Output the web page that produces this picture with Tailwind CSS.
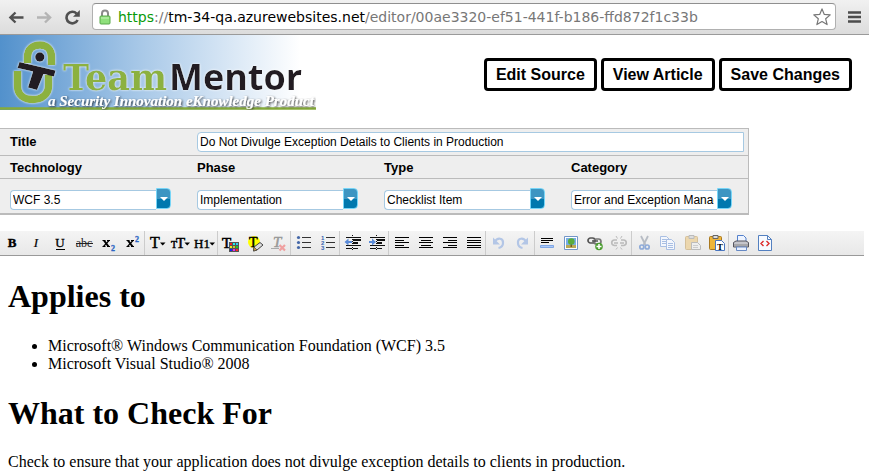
<!DOCTYPE html>
<html lang="en">
<head>
<meta charset="utf-8">
<meta name="viewport" content="width=device-width, initial-scale=1">
<title>TeamMentor Editor</title>
<script src="https://cdn.jsdelivr.net/npm/@tailwindcss/browser@4"></script>
</head>
<body class="min-h-screen overflow-hidden bg-white font-['Liberation_Sans',Arial,sans-serif] text-black">

<!-- Browser bar -->
<nav class="flex h-[35px] items-center border-b border-[#9a9a9a] bg-linear-to-b from-[#f1f1f1] to-[#dcdcdc] pr-2 pb-px" aria-label="Browser">
  <button class="ml-2 size-4" aria-label="Back"><svg viewBox="0 0 16 16" class="size-4" fill="none" stroke="#505050" stroke-width="2.4"><path d="M15.5 8.5H3M7.5 3.5L2.4 8.5l5.1 5"/></svg></button>
  <button class="ml-3 size-4" aria-label="Forward"><svg viewBox="0 0 16 16" class="size-4" fill="none" stroke="#b4b4b4" stroke-width="2.4"><path d="M1 8.500H13.500M9 3.500l5.100 5-5.100 5"/></svg></button>
  <button class="ml-3 size-4" aria-label="Reload"><svg viewBox="0 0 16 16" class="size-4" fill="none"><path d="M12.600 4.600A5.800 5.800 0 1 0 13.600 11" stroke="#505050" stroke-width="2.600"/><path d="M15.800 1v6.800H9z" fill="#505050"/></svg></button>
  <div class="ml-3 flex h-[27px] min-w-0 flex-1 items-center rounded-[4px] border border-[#b0b0b0] border-t-[#8f8f8f] bg-white pr-1 pl-1.5">
    <svg viewBox="0 0 12 16" class="h-4 w-3 shrink-0" aria-hidden="true"><path d="M3 8V4.500a3 3 0 0 1 6 0V8" fill="none" stroke="#8b8b8b" stroke-width="2"/><rect x="1" y="7" width="10" height="8" rx="1" fill="#8fe07c" stroke="#58a94a"/><path d="M2 9h8" stroke="#c5f5b8"/></svg>
    <div role="textbox" contenteditable="true" aria-label="Address" class="ml-[7px] min-w-0 flex-1 overflow-hidden font-['DejaVu_Sans',sans-serif] text-sm leading-5 whitespace-nowrap text-[#777]"><span class="text-[#0a9a0a]">https</span>://<span class="text-black">tm-34-qa.azurewebsites.net</span>/editor/00ae3320-ef51-441f-b186-ffd872f1c33b</div>
    <button class="size-[18px] shrink-0" aria-label="Bookmark"><svg viewBox="0 0 18 18" class="size-[18px]" fill="#fff" stroke="#777" stroke-width="1.200" stroke-linejoin="round"><path d="M9 .9l2.300 5.500 5.900.5-4.500 3.900 1.400 5.800L9 13.500l-5.100 3.100 1.400-5.800L.8 6.900l5.900-.5z"/></svg></button>
  </div>
  <button class="ml-3 h-3 w-[13px]" aria-label="Menu"><svg viewBox="0 0 13 12" class="h-3 w-[13px]" stroke="#4c4c4c" stroke-width="2.600"><path d="M0 1.500h13M0 6h13M0 10.500h13"/></svg></button>
</nav>

<!-- Banner -->
<header class="flex items-start justify-between">
  <a href="#" aria-label="TeamMentor home" class="block bg-linear-to-r from-[#5291cc] via-[#a9c9e8] via-45% to-white to-95%">
    <svg viewBox="0 0 316 75" class="block h-[75px] w-[316px]">
      <defs>
        <filter id="glow" x="-20%" y="-20%" width="140%" height="140%"><feDropShadow dx="0" dy="0" stdDeviation="1.300" flood-color="#fff" flood-opacity="1"/></filter>
        <filter id="shade" x="-5%" y="-30%" width="110%" height="170%"><feDropShadow dx="1" dy="1" stdDeviation="1" flood-color="#222" flood-opacity=".85"/></filter>
      </defs>
      <path d="M0 73.500H316" stroke="#86ab3a" stroke-width="2.500"/>
      <g filter="url(#glow)">
        <path d="M27.500 28V22C27.500 14 33 10 40 10S51.500 15 51.500 22V30" fill="none" stroke="#8cb140" stroke-width="7.500"/>
        <path d="M17.500 36V51C17.500 60 24 64.500 33 64.500S48.500 59 48.500 51V40" fill="none" stroke="#8cb140" stroke-width="7.500"/>
        <circle cx="39.800" cy="22" r="4.700" fill="#231f20"/>
        <path d="M19.500 27L55.500 35.500 54 41.500 43.500 39 37 55 28 52.500 33 36.500 17.500 33z" fill="#231f20"/>
        <text x="63" y="54.500" font-family="'DejaVu Serif',serif" font-weight="bold" font-size="35" fill="#8cb140">Team</text>
        <text x="169" y="54.500" font-family="'Open Sans',sans-serif" font-weight="bold" font-size="36" fill="#231f20">Mentor</text>
      </g>
      <text x="48" y="71" filter="url(#shade)" font-family="'Liberation Serif',serif" font-style="italic" font-weight="bold" font-size="15" fill="#fff">a Security Innovation eKnowledge Product</text>
    </svg>
  </a>
  <div class="mt-[23px] mr-[17px] flex gap-1 text-base leading-5 font-bold">
    <button class="rounded-[4px] border-3 border-black px-[9px] pt-1 pb-[3px]">Edit Source</button>
    <button class="rounded-[4px] border-3 border-black px-[9px] pt-1 pb-[3px]">View Article</button>
    <button class="rounded-[4px] border-3 border-black px-[9px] pt-1 pb-[3px]">Save Changes</button>
  </div>
</header>

<!-- Article properties -->
<form class="mt-[18px] max-w-[749px] border-t border-r border-b-2 border-[#bbb] bg-[#eee]">
  <div class="grid grid-cols-4 items-center border-b border-[#bbb] py-[3px]">
    <label for="title" class="pl-2.5 text-[13px] leading-4 font-bold">Title</label>
    <div class="col-span-3 pr-1 pl-2.5"><input id="title" class="block h-5 w-full rounded-l-[4px] border border-[#a6c9e2] bg-white px-[2px] text-xs" value="Do Not Divulge Exception Details to Clients in Production"></div>
  </div>
  <div class="grid grid-cols-4 border-b border-[#bbb] pt-1 pb-[2px] text-[13px] leading-4 font-bold">
    <label for="technology" class="pl-2.5">Technology</label>
    <label for="phase" class="pl-2.5">Phase</label>
    <label for="type" class="pl-2.5">Type</label>
    <label for="category" class="pl-2.5">Category</label>
  </div>
  <div class="grid grid-cols-4 pt-[9px] pb-[3px] text-xs">
    <div class="flex items-end pl-2.5">
      <select id="technology" class="h-5 w-[146px] appearance-none rounded-l-[4px] border border-r-0 border-[#a6c9e2] bg-white pr-[3px] pl-[2px]"><option>WCF 3.5</option></select>
      <label for="technology" aria-label="Open technology list" class="mb-px flex h-[21px] w-[15px] items-center justify-center rounded-r-[4px] border border-[#77d5f7] bg-linear-to-b from-[#3d95c2] from-50% to-[#0078ae] to-50%"><svg viewBox="0 0 8 4" class="h-1 w-2" fill="#fff"><path d="M0 0h8L4 4z"/></svg></label>
    </div>
    <div class="flex items-end pl-2.5">
      <select id="phase" class="h-5 w-[146px] appearance-none rounded-l-[4px] border border-r-0 border-[#a6c9e2] bg-white pr-[3px] pl-[2px]"><option>Implementation</option></select>
      <label for="phase" aria-label="Open phase list" class="mb-px flex h-[21px] w-[15px] items-center justify-center rounded-r-[4px] border border-[#77d5f7] bg-linear-to-b from-[#3d95c2] from-50% to-[#0078ae] to-50%"><svg viewBox="0 0 8 4" class="h-1 w-2" fill="#fff"><path d="M0 0h8L4 4z"/></svg></label>
    </div>
    <div class="flex items-end pl-2.5">
      <select id="type" class="h-5 w-[146px] appearance-none rounded-l-[4px] border border-r-0 border-[#a6c9e2] bg-white pr-[3px] pl-[2px]"><option>Checklist Item</option></select>
      <label for="type" aria-label="Open type list" class="mb-px flex h-[21px] w-[15px] items-center justify-center rounded-r-[4px] border border-[#77d5f7] bg-linear-to-b from-[#3d95c2] from-50% to-[#0078ae] to-50%"><svg viewBox="0 0 8 4" class="h-1 w-2" fill="#fff"><path d="M0 0h8L4 4z"/></svg></label>
    </div>
    <div class="flex items-end pl-2.5">
      <select id="category" class="h-5 w-[146px] appearance-none rounded-l-[4px] border border-r-0 border-[#a6c9e2] bg-white pr-[3px] pl-[2px]"><option>Error and Exception Management</option></select>
      <label for="category" aria-label="Open category list" class="mb-px flex h-[21px] w-[15px] items-center justify-center rounded-r-[4px] border border-[#77d5f7] bg-linear-to-b from-[#3d95c2] from-50% to-[#0078ae] to-50%"><svg viewBox="0 0 8 4" class="h-1 w-2" fill="#fff"><path d="M0 0h8L4 4z"/></svg></label>
    </div>
  </div>
</form>

<!-- Editor toolbar -->
<div role="toolbar" aria-label="Formatting" class="mt-4 mr-[5px] flex h-[25px] border-b border-[#999] bg-linear-to-b from-[#f4f4f4] to-[#e8e8e8] font-['Liberation_Serif',serif]">
  <div class="flex border-r border-[#ccc]">
    <button aria-label="Bold"><svg viewBox="0 0 24 24" class="size-6"><text x="12" y="16" text-anchor="middle" font-size="13" font-weight="bold" stroke="#000" stroke-width=".4">B</text></svg></button>
    <button aria-label="Italic"><svg viewBox="0 0 24 24" class="size-6"><text x="12" y="16" text-anchor="middle" font-size="13" font-style="italic" stroke="#000" stroke-width=".2">I</text></svg></button>
    <button aria-label="Underline"><svg viewBox="0 0 24 24" class="size-6"><text x="12" y="16" text-anchor="middle" font-size="13" stroke="#000" stroke-width=".3">U</text><path d="M8 18.500h9" stroke="#000"/></svg></button>
    <button aria-label="Strikethrough"><svg viewBox="0 0 24 24" class="size-6"><text x="12" y="16" text-anchor="middle" font-size="12" fill="#222">abc</text><path d="M4 12.500h17" stroke="#222"/></svg></button>
    <button aria-label="Subscript"><svg viewBox="0 0 24 24" class="size-6"><path d="M8 9.500l4.500 6" stroke="#000" stroke-width="2"/><path d="M13 9.500L7.500 15.500M6.500 9.500h3M11 9.500h3M6.500 15.500h3M11 15.500h3" stroke="#000" stroke-width="1.200"/><text x="15" y="19.500" font-size="8" font-weight="bold" fill="#2c66c4" stroke="#2c66c4" stroke-width=".3">2</text></svg></button>
    <button aria-label="Superscript"><svg viewBox="0 0 24 24" class="size-6"><path d="M8 9.500l4.500 6" stroke="#000" stroke-width="2"/><path d="M13 9.500L7.500 15.500M6.500 9.500h3M11 9.500h3M6.500 15.500h3M11 15.500h3" stroke="#000" stroke-width="1.200"/><text x="15" y="10.500" font-size="8" font-weight="bold" fill="#2c66c4" stroke="#2c66c4" stroke-width=".3">2</text></svg></button>
  </div>
  <div class="flex border-r border-[#ccc]">
    <button aria-label="Font"><svg viewBox="0 0 24 24" class="size-6"><text x="5" y="17" font-size="16" stroke="#000" stroke-width=".5">T</text><path d="M15 11.500h5.500L17.700 14.500z"/></svg></button>
    <button aria-label="Size"><svg viewBox="0 0 24 24" class="size-6"><text x="2" y="17" font-size="10" stroke="#000" stroke-width=".5">T</text><text x="7" y="17" font-size="15" stroke="#000" stroke-width=".5">T</text><path d="M15.500 11.500H21L18.200 14.500z"/></svg></button>
    <button aria-label="Style"><svg viewBox="0 0 24 24" class="size-6"><text x="1" y="17" font-size="13" stroke="#000" stroke-width=".4">H1</text><path d="M16.500 11.500H22L19.200 14.500z"/></svg></button>
  </div>
  <div class="flex border-r border-[#ccc]">
    <button aria-label="Text colour"><svg viewBox="0 0 24 24" class="size-6"><text x="4" y="16.500" font-size="15" stroke="#000" stroke-width=".6">T</text><g shape-rendering="crispEdges"><path d="M11 11h10v10h-10z" fill="#555"/><path d="M12 12h2v2h-2z" fill="#e22"/><path d="M15 12h2v2h-2z" fill="#2ee"/><path d="M18 12h2v2h-2z" fill="#3ce"/><path d="M12 15h2v2h-2z" fill="#ee2"/><path d="M15 15h2v2h-2z" fill="#cc2"/><path d="M18 15h2v2h-2z" fill="#2c2"/><path d="M12 18h2v2h-2z" fill="#12e"/><path d="M15 18h2v2h-2z" fill="#e2e"/><path d="M18 18h2v2h-2z" fill="#f22"/></g></svg></button>
    <button aria-label="Highlight"><svg viewBox="0 0 24 24" class="size-6"><circle cx="12" cy="11" r="6" fill="#ff0"/><text x="7" y="16" font-size="14" stroke="#000" stroke-width=".5">T</text><path d="M11.500 20l.5-4 6-4.500 3 2.500L15 19z" fill="#ddd" stroke="#444"/><path d="M11.500 20l.5-4 3 3z" fill="#dca640" stroke="#444" stroke-width=".7"/></svg></button>
    <button aria-label="Remove formatting"><svg viewBox="0 0 24 24" class="size-6"><text x="7" y="15.500" font-size="15" font-style="italic" fill="#999" stroke="#999" stroke-width=".5">T</text><path d="M5 17.500h8" stroke="#aaa"/><path d="M13.500 14l5.500 5.500M19 14l-5.500 5.500" stroke="#f0a0a0" stroke-width="2.200"/></svg></button>
  </div>
  <div class="flex border-r border-[#ccc]">
    <button aria-label="Bullets"><svg viewBox="0 0 24 24" class="size-6"><g fill="#4467a8"><circle cx="7.500" cy="6.500" r="1.600"/><circle cx="7.500" cy="11.500" r="1.600"/><circle cx="7.500" cy="16.500" r="1.600"/></g><path d="M11 6.500h9M11 11.500h9M11 16.500h9" stroke="#333"/></svg></button>
    <button aria-label="Numbering"><svg viewBox="0 0 24 24" class="size-6"><g font-family="'Liberation Sans',sans-serif" font-size="6" font-weight="bold" fill="#3463b0"><text x="6" y="9">1</text><text x="6" y="14">2</text><text x="6" y="19">3</text></g><path d="M11 6.500h9M11 11.500h9M11 16.500h9" stroke="#333"/></svg></button>
  </div>
  <div class="flex border-r border-[#ccc]">
    <button aria-label="Outdent"><svg viewBox="0 0 24 24" class="size-6"><path d="M6 6.500h6M13 6.500h8M6 14.500h6M13 14.500h8M6 17.500h6M13 17.500h5" stroke="#111"/><path d="M13 9h8M13 12h5" stroke="#111" stroke-width="2"/><path d="M12.500 4v15" stroke="#111" stroke-dasharray="1 1"/><path d="M4.500 11l4-3.500v2.500H12v2H8.500v2.500z" fill="#5b8bd8"/></svg></button>
    <button aria-label="Indent"><svg viewBox="0 0 24 24" class="size-6"><path d="M6 6.500h6M13 6.500h8M6 14.500h6M13 14.500h8M6 17.500h6M13 17.500h5" stroke="#111"/><path d="M13 9h8M13 12h5" stroke="#111" stroke-width="2"/><path d="M12.500 4v15" stroke="#111" stroke-dasharray="1 1"/><path d="M12 11L8 7.500V10H5v2h3v2.500z" fill="#5b8bd8"/></svg></button>
  </div>
  <div class="flex border-r border-[#ccc]">
    <button aria-label="Align left"><svg viewBox="0 0 24 24" class="size-6" stroke="#000"><path d="M6 6.500h14M6 9.500h9M6 11.500h14M6 14.500h9M6 16.500h14"/></svg></button>
    <button aria-label="Centre"><svg viewBox="0 0 24 24" class="size-6" stroke="#000"><path d="M6 6.500h14M8 9.500h10M6 11.500h14M8 14.500h10M6 16.500h14"/></svg></button>
    <button aria-label="Align right"><svg viewBox="0 0 24 24" class="size-6" stroke="#000"><path d="M6 6.500h14M11 9.500h9M6 11.500h14M11 14.500h9M6 16.500h14"/></svg></button>
    <button aria-label="Justify"><svg viewBox="0 0 24 24" class="size-6" stroke="#000"><path d="M6 6.500h14M6 9.500h14M6 11.500h14M6 14.500h14M6 16.500h14"/></svg></button>
  </div>
  <div class="flex border-r border-[#ccc]">
    <button aria-label="Undo"><svg viewBox="0 0 24 24" class="size-6"><path d="M8.500 11c3-5 9-4 8.500 1 0 3-2 4.500-4.500 5" fill="none" stroke="#b3c6e6" stroke-width="2.200"/><path d="M7 6.500v7h7z" fill="#b3c6e6"/></svg></button>
    <button aria-label="Redo"><svg viewBox="0 0 24 24" class="size-6"><path d="M16.500 11c-3-5-9-4-8.500 1 0 3 2 4.500 4.500 5" fill="none" stroke="#b3c6e6" stroke-width="2.200"/><path d="M18 6.500v7h-7z" fill="#b3c6e6"/></svg></button>
  </div>
  <div class="flex border-r border-[#ccc]">
    <button aria-label="Insert rule"><svg viewBox="0 0 24 24" class="size-6"><path d="M6 7.500h12M6 9.500h12M6 11.500h8" stroke="#000"/><path d="M5.500 14.500h13v2h-13z" fill="#a9c8fa" stroke="#6b98e0" stroke-width=".8"/></svg></button>
    <button aria-label="Insert image"><svg viewBox="0 0 24 24" class="size-6"><path d="M5.500 5.500h13v13h-13z" fill="#fff" stroke="#7396c8"/><path d="M7 7h10v10H7z" fill="#78aee6"/><path d="M7 14h10v3H7z" fill="#b9a954"/><path d="M11.500 12h1.500v4h-1.500z" fill="#745c25"/><circle cx="12.300" cy="10.500" r="3.300" fill="#59ac3c"/></svg></button>
    <button aria-label="Insert link"><svg viewBox="0 0 24 24" class="size-6" fill="none"><rect x="5" y="7" width="7" height="5" rx="2.500" stroke="#555" stroke-width="1.700"/><rect x="11" y="8" width="7" height="5" rx="2.500" stroke="#777" stroke-width="1.700"/><path d="M9 10h6" stroke="#555" stroke-width="1.500"/><circle cx="16" cy="15.500" r="3.800" fill="#4c9d31"/><path d="M13.500 15.500h5M16 13v5" stroke="#fff" stroke-width="1.500"/></svg></button>
    <button aria-label="Remove link"><svg viewBox="0 0 24 24" class="size-6" fill="none" stroke="#bbb" stroke-width="1.700"><path d="M10 9H7.500a2.500 2.500 0 0 0 0 5.500H10M14 9h2.500a2.500 2.500 0 0 1 0 5.500H14M7 12h4M13 12h4"/><path d="M9 5l1.500 2.500M15 5l-1.500 2.500M9 18.500l1.500-2M15 18.500l-1.500-2" stroke-width="1"/></svg></button>
  </div>
  <div class="flex border-r border-[#ccc]">
    <button aria-label="Cut"><svg viewBox="0 0 24 24" class="size-6" fill="none"><path d="M9 5l4.500 9M16 5l-4.500 9" stroke="#b7bcc4" stroke-width="1.800"/><circle cx="9.800" cy="16" r="2" stroke="#8fabd8" stroke-width="1.700"/><circle cx="15.200" cy="16" r="2" stroke="#8fabd8" stroke-width="1.700"/></svg></button>
    <button aria-label="Copy"><svg viewBox="0 0 24 24" class="size-6" stroke="#a9bfe3"><path d="M4.500 5.500h6l3 3v7h-9z" fill="#f4f7fd"/><path d="M6 8.500h5M6 10.500h5M6 12.500h5"/><path d="M10.500 8.500h5l3 3v7h-8z" fill="#f4f7fd"/><path d="M12 12.500h5M12 14.500h5M12 16.500h5"/></svg></button>
    <button aria-label="Paste"><svg viewBox="0 0 24 24" class="size-6"><rect x="5.500" y="5.500" width="12" height="13" rx="1" fill="#ecd7ae" stroke="#d5c09a"/><path d="M9 4.500h5v3H9z" fill="#ddd" stroke="#bbb"/><path d="M11.500 11.500h6l3 3v4h-9z" fill="#eee" stroke="#bbb"/><path d="M13 14.500h5M13 16.500h5" stroke="#ccc"/></svg></button>
    <button aria-label="Paste text"><svg viewBox="0 0 24 24" class="size-6"><rect x="5.500" y="5.500" width="12" height="13" rx="1" fill="#efb53a" stroke="#a9781f"/><path d="M9 4.500h5v3H9z" fill="#ddd" stroke="#666"/><path d="M11.500 9.500h6l3 3v7h-9z" fill="#fff" stroke="#4a76c0"/><text x="16" y="18.500" text-anchor="middle" font-size="9" font-weight="bold">T</text></svg></button>
  </div>
  <div class="flex">
    <button aria-label="Print"><svg viewBox="0 0 24 24" class="size-6"><path d="M8.500 11V4.500h6l2.500 2.500v4" fill="#eef4ff" stroke="#5380cc"/><path d="M4.500 11.500l2.500-1.500h10l2.500 1.500v4.500h-15z" fill="#c5c5cb" stroke="#55555e"/><path d="M7.500 16h10v3.500h-10z" fill="#eaf1ff" stroke="#6689c4"/><path d="M5 14h14" stroke="#888"/></svg></button>
    <button aria-label="Source"><svg viewBox="0 0 24 24" class="size-6" fill="none"><path d="M5.500 4.500h9l4 4v11h-13z" fill="#f7faff" stroke="#5380c0"/><path d="M14.500 4.500v4h4" stroke="#5380c0"/><path d="M10.500 10L8 12.500l2.500 2.500M13.500 10l2.500 2.500-2.500 2.500" stroke="#dc2a2a" stroke-width="1.400"/></svg></button>
  </div>
</div>

<!-- Article body -->
<main contenteditable="true" aria-label="Article content" class="px-2 font-['Liberation_Serif',serif] text-base leading-[18px] outline-none">
  <h1 class="mt-[22px] text-[32px] leading-9 font-bold">Applies to</h1>
  <ul class="mt-[23px] list-disc pl-10">
    <li>Microsoft® Windows Communication Foundation (WCF) 3.5</li>
    <li>Microsoft Visual Studio® 2008</li>
  </ul>
  <h1 class="mt-[22px] text-[32px] leading-9 font-bold">What to Check For</h1>
  <p class="mt-[22px]">Check to ensure that your application does not divulge exception details to clients in production.</p>
</main>
</body>
</html>
